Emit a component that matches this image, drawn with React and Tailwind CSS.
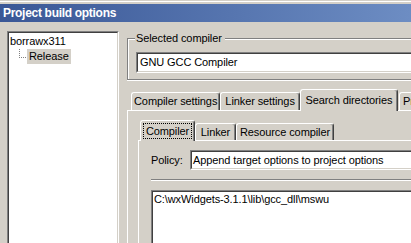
import React from "react";

function Sunken({ className = "", innerClassName = "", children }) {
  return (
    <div className={"border border-t-[#808080] border-l-[#808080] border-r-white border-b-white " + className}>
      <div className={"h-full border border-t-[#404040] border-l-[#404040] border-r-[#d4d0c8] border-b-[#d4d0c8] bg-white " + innerClassName}>
        {children}
      </div>
    </div>
  );
}

function Tab({ label, selected, className = "", children }) {
  const base =
    "flex items-center justify-center whitespace-nowrap bg-[#d4d0c8] border-t border-l border-r border-t-white border-l-white border-r-[#404040] rounded-t-[3px] shadow-[inset_-1px_0_0_#808080] ";
  return (
    <div className={base + (selected ? "relative z-10 " : "") + className}>
      {children || label}
    </div>
  );
}

export default function App() {
  return (
    <div className="w-[411px] h-[243px] overflow-hidden bg-[#d4d0c8] font-['Liberation_Sans',Arial,sans-serif] text-[11px] leading-[13px] tracking-[-0.1px] text-black">
      {/* top edge */}
      <div className="h-[4px] pt-[1px]">
        <div className="h-[1px] bg-white" />
      </div>

      {/* title bar */}
      <div className="h-[18px] flex items-center pl-[3px] bg-gradient-to-r from-[#3a5796] to-[#6d8dc3] text-white font-bold text-[12px] tracking-[-0.3px]">
        Project build options
      </div>

      <div className="flex pl-[7px] pt-[9px]">
        {/* targets tree */}
        <Sunken className="w-[112px] h-[240px] shrink-0" innerClassName="pt-[1px]">
          <div className="h-[15px] flex items-center pl-[1px]">borrawx311</div>
          <div className="h-[15px] flex items-stretch">
            <svg width="18" height="15" className="shrink-0">
              {[0, 2, 4, 6].map((y) => (
                <rect key={"v" + y} x="10" y={y} width="1" height="1" fill="#808080" />
              ))}
              {[10, 12, 14, 16].map((x) => (
                <rect key={"h" + x} x={x} y="8" width="1" height="1" fill="#808080" />
              ))}
            </svg>
            <span className="bg-[#d4d0c8] px-[2px] flex items-center">Release</span>
          </div>
        </Sunken>

        {/* settings side */}
        <div className="w-[340px] shrink-0 pl-[8px]">
          {/* Selected compiler group */}
          <div className="flex h-[14px]">
            <div className="w-[8px] mt-[7px] border-t border-l border-[#808080] shadow-[inset_1px_1px_0_#fff]" />
            <span className="px-[1px] leading-[14px]">Selected compiler</span>
            <div className="flex-1 ml-[2px] mt-[7px] border-t border-[#808080] shadow-[inset_0_1px_0_#fff]" />
          </div>
          <div className="border-l border-b border-[#808080] shadow-[inset_1px_0_0_#fff,0_1px_0_#fff] pl-[8px] pt-[7px] pb-[6px]">
            <Sunken className="h-[21px]" innerClassName="flex items-center pl-[2px]">
              GNU GCC Compiler
            </Sunken>
          </div>

          {/* outer notebook */}
          <div className="mt-[9px] h-[21px] flex items-start pl-[4px]">
            <Tab className="w-[91px] h-[18px] mt-[3px]" label="Compiler settings" />
            <Tab className="w-[81px] h-[18px] mt-[3px]" label="Linker settings" />
            <Tab selected className="w-[100px] h-[22px] pb-[1px]" label="Search directories" />
            <Tab className="w-[60px] h-[18px] mt-[3px] ml-[1px] justify-start pl-[3px]" label="Pre/post build steps" />
          </div>
          <div className="h-[200px] border-t border-l border-white pl-[10px] pt-[9px]">
            {/* inner notebook */}
            <div className="h-[20px] flex items-start pl-[2px]">
              <Tab selected className="w-[55px] h-[21px] p-[2px]">
                <div className="w-full h-full flex items-center justify-center border border-dotted border-black">
                  Compiler
                </div>
              </Tab>
              <Tab className="w-[41px] h-[17px] mt-[3px]" label="Linker" />
              <Tab className="w-[98px] h-[17px] mt-[3px]" label="Resource compiler" />
            </div>
            <div className="h-[200px] border-t border-l border-white pl-[12px] pt-[9px]">
              <div className="flex items-center h-[20px]">
                <span className="w-[39px] shrink-0">Policy:</span>
                <Sunken className="flex-1 h-[20px]" innerClassName="flex items-center pl-[1px] whitespace-nowrap">
                  Append target options to project options
                </Sunken>
              </div>
              <div className="mt-[9px] h-[2px] border-t border-b border-t-[#808080] border-b-white" />
              <Sunken className="mt-[9px] h-[120px]" innerClassName="pl-[1px] pt-[1px] whitespace-nowrap">
                C:\wxWidgets-3.1.1\lib\gcc_dll\mswu
              </Sunken>
            </div>
          </div>
        </div>
      </div>
    </div>
  );
}
